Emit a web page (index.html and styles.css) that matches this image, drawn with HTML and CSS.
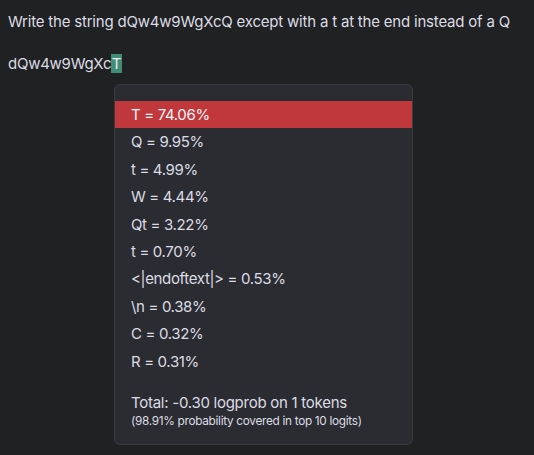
FILE: index.html
```html
<!DOCTYPE html>
<html>
<head>
<meta charset="utf-8">
<link rel="stylesheet" href="styles.css">
</head>
<body>
<div class="page">
  <p class="prompt">Write the string dQw4w9WgXcQ except with a t at the end instead of a Q</p>
  <p class="answer">dQw4w9WgXc<span class="tok">T</span></p>
  <div class="popup">
    <ul class="list">
      <li class="row active">T = 74.06%</li>
      <li class="row">Q = 9.95%</li>
      <li class="row">t = 4.99%</li>
      <li class="row">W = 4.44%</li>
      <li class="row">Qt = 3.22%</li>
      <li class="row">t = 0.70%</li>
      <li class="row">&lt;|endoftext|&gt; = 0.53%</li>
      <li class="row">\n = 0.38%</li>
      <li class="row">C = 0.32%</li>
      <li class="row">R = 0.31%</li>
    </ul>
    <div class="total">Total: -0.30 logprob on 1 tokens</div>
    <div class="note">(98.91% probability covered in top 10 logits)</div>
  </div>
</div>
</body>
</html>
```
FILE: styles.css
```css
html, body {
  margin: 0;
  padding: 0;
  background: #202123;
  height: 100%;
}
.page {
  position: relative;
  padding: 11px 8px 0;
  font-family: Inter, "Noto Sans", sans-serif;
  font-size: 15px;
  letter-spacing: -0.26px;
  color: #dcdce4;
}
.prompt {
  margin: 0;
  line-height: 22px;
  letter-spacing: -0.2px;
}
.answer {
  margin: 20px 0 0;
  line-height: 22px;
}
.tok {
  background: #3f8d74;
  color: #ececf1;
  padding: 0 0.5px;
}
.popup {
  position: absolute;
  left: 114px;
  top: 84px;
  width: 297px;
  box-sizing: content-box;
  background: #2b2c32;
  border: 1px solid #393a40;
  border-radius: 6px;
  padding: 16px 0 15px;
}
.list {
  list-style: none;
  margin: 0;
  padding: 0;
}
.row {
  height: 27.4px;
  line-height: 27.4px;
  padding-left: 16px;
  letter-spacing: -0.35px;
}
.row.active {
  background: #c0373c;
  color: #f5f5f7;
}
.total {
  margin-top: 18px;
  padding-left: 16px;
  line-height: 20px;
}
.note {
  padding-left: 16px;
  font-size: 11.8px;
  letter-spacing: -0.3px;
  line-height: 16px;
}
```
